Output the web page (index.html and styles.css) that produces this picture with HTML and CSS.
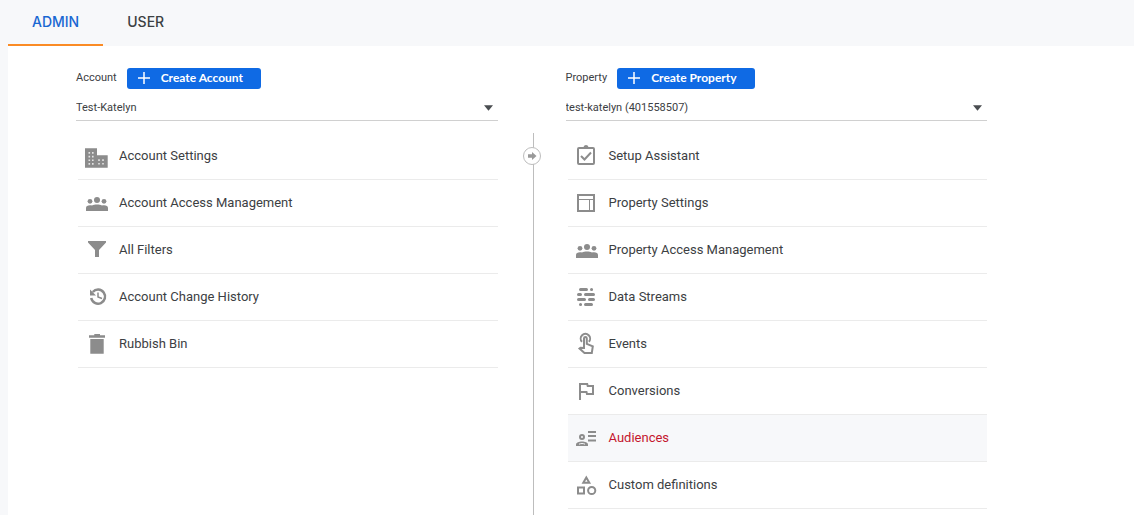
FILE: index.html
```html
<!DOCTYPE html>
<html lang="en-GB">
<head>
<meta charset="utf-8">
<title>Admin</title>
<link rel="stylesheet" href="styles.css">
</head>
<body>
<svg class="sprite" aria-hidden="true">
  <symbol id="people" viewBox="0 0 24 24">
    <circle cx="13" cy="9" r="3"/><circle cx="6" cy="10.3" r="2.4"/><circle cx="20" cy="10.3" r="2.4"/>
    <path d="M2 20v-3c0-2 1.500-2.800 4-2.800.9 0 1.500.1 2 .2 1.400-.7 3-1 5-1s3.600.3 5 1c.5-.1 1.100-.2 2-.2 2.500 0 4 .8 4 2.800v3z"/>
  </symbol>
  <symbol id="plus" viewBox="0 0 12 12"><path d="M6 0v12M0 6h12" fill="none" stroke="currentColor" stroke-width="1.500"/></symbol>
</svg>
<nav class="tabs">
  <a class="tab tab-active" href="#admin" aria-current="page">ADMIN</a>
  <a class="tab" href="#user">USER</a>
</nav>
<main class="panel">
  <section class="column">
    <div class="column-head">
      <label for="account">Account</label>
      <button class="create" type="button"><svg><use href="#plus"/></svg>Create Account</button>
    </div>
    <div class="picker">
      <select id="account"><option>Test-Katelyn</option></select>
      <svg class="caret" viewBox="0 0 10 6"><path d="M0 0h10L5 6z"/></svg>
    </div>
    <ul class="menu">
      <li><a href="#account-settings"><svg viewBox="0 0 24 24"><path d="M1 4.300h12v7h10.700v12.400H1z"/><path class="windows" d="M5.300 8v13M8.800 8v13M15 15.200v6M19 15.200v6"/></svg>Account Settings</a></li>
      <li><a href="#account-access"><svg><use href="#people"/></svg>Account Access Management</a></li>
      <li><a href="#filters"><svg viewBox="0 0 24 24"><path d="M4 3h18v1.500l-7 7.500v7h-4v-7L4 4.500z"/></svg>All Filters</a></li>
      <li><a href="#history"><svg viewBox="0 0 24 24"><path class="line bold" d="M7.200 13a7 7 0 1 0 1.600-6"/><path d="M6 4.500v6h6z"/><path class="line hands" d="M14 7.500V12l4 1.500"/></svg>Account Change History</a></li>
      <li><a href="#bin"><svg viewBox="0 0 24 24"><path d="M5 3.300h5.300V2H16v1.300h5v2.400H5zM6.300 7h13.400v14.700H6.300z"/></svg>Rubbish Bin</a></li>
    </ul>
  </section>
  <div class="divider">
    <button class="move" type="button" aria-label="Move"><svg viewBox="0 0 10 10"><path d="M1 3.200h4V1l4.500 4L5 9V6.800H1z"/></svg></button>
  </div>
  <section class="column">
    <div class="column-head">
      <label for="property">Property</label>
      <button class="create" type="button"><svg><use href="#plus"/></svg>Create Property</button>
    </div>
    <div class="picker">
      <select id="property"><option>test-katelyn (401558507)</option></select>
      <svg class="caret" viewBox="0 0 10 6"><path d="M0 0h10L5 6z"/></svg>
    </div>
    <ul class="menu">
      <li><a href="#setup"><svg viewBox="0 0 24 24"><rect class="line" x="4" y="4" width="16" height="16" rx="1"/><path d="M8 5V3h1.500a2.600 2.600 0 0 1 5 0H16v2z"/><path class="line" d="M7 12l3.500 3.500 6.500-7"/></svg>Setup Assistant</a></li>
      <li><a href="#property-settings"><svg viewBox="0 0 24 24"><path class="line" d="M4 4h16v16H4z"/><path class="line thin" d="M4 8.500h16M15.500 8.500V20"/></svg>Property Settings</a></li>
      <li><a href="#property-access"><svg><use href="#people"/></svg>Property Access Management</a></li>
      <li><a href="#streams"><svg viewBox="0 0 24 24"><path class="line dash" d="M6.500 4.500h6M17.500 4.500h.1M4.500 9.500h2M11.500 9.500h8M4.500 14.500h6M15.500 14.500h4M6.500 19.500h.1M11.500 19.500h6"/></svg>Data Streams</a></li>
      <li><a href="#events"><svg viewBox="0 0 24 24"><path class="line" d="M8 9.800a4.700 4.700 0 1 1 6.800 0"/><path class="line" d="M10 16V6.500a1.400 1.400 0 0 1 2.800 0v5.300l6 2.600-1 6.600h-7.300L5.500 16.500l1-.8z"/></svg>Events</a></li>
      <li><a href="#conversions"><svg viewBox="0 0 24 24"><path class="line" d="M6 21V5h7.200l.5 2H19v8h-6l-.5-2H6"/></svg>Conversions</a></li>
      <li><a class="selected" href="#audiences"><svg viewBox="0 0 24 24"><path class="line" d="M14 6h8M14 10h8M14 14.500h8"/><circle class="line" cx="8" cy="11" r="2"/><path d="M2 20v-1.500C2 16.500 5 15.500 8 15.500s6 1 6 3V20z"/><path class="hollow" d="M5 18.200c1.500-.9 4.500-.9 6 0"/></svg>Audiences</a></li>
      <li><a href="#definitions"><svg viewBox="0 0 24 24"><path class="line" d="M12.300 4.500l-3 5.200h6zM4 14.500h6v6H4z"/><circle class="line" cx="17.700" cy="17.500" r="3.600"/></svg>Custom definitions</a></li>
    </ul>
  </section>
</main>
</body>
</html>
```
FILE: styles.css
```css
* { box-sizing: border-box; }
body {
  margin: 0;
  min-height: 100vh;
  display: flex;
  flex-direction: column;
  background: #f7f8fa;
  color: #3c4043;
  font-family: Roboto, sans-serif;
  font-size: 13px;
}
.sprite { display: none; }
.tabs { display: flex; padding-left: 8px; }
.tab {
  padding: 12px 24px 12px;
  border-bottom: 2px solid transparent;
  color: #3c4043;
  font: 500 14px/20px Inter, sans-serif;
  text-decoration: none;
}
.tab-active { border-color: #fa8b25; color: #1967d2; }
.panel {
  flex: 1;
  display: grid;
  grid-template-columns: 1fr 68px 1fr;
  margin-left: 8px;
  padding: 21px 147px 0 68px;
  background: #fff;
}
.column-head { display: flex; align-items: center; gap: 10px; height: 22px; font-size: 11px; }
.column-head label { padding-bottom: 2px; }
.create {
  display: flex;
  align-items: center;
  gap: 11px;
  height: 21px;
  padding: 0 18px 0 11px;
  border: 0;
  border-radius: 3px;
  background: #0f6ae4;
  color: #fff;
  font: 700 12px/20px Lato, sans-serif;
}
.create svg { width: 12px; height: 12px; }
.picker { position: relative; margin-top: 5px; border-bottom: 1px solid #d0d0d0; }
.picker select {
  display: block;
  width: 100%;
  height: 26px;
  padding: 0;
  border: 0;
  appearance: none;
  background: transparent;
  color: #3c4043;
  font: 11px Roboto, sans-serif;
}
.caret { position: absolute; right: 5px; top: 11px; width: 9px; height: 6px; fill: #4a4d51; pointer-events: none; }
.menu { list-style: none; margin: 12px 0 0 2px; padding: 0; }
.menu a {
  display: flex;
  align-items: center;
  gap: 11px;
  height: 47px;
  padding: 0 6px 2px;
  border-bottom: 1px solid #ebebeb;
  color: #3c4043;
  text-decoration: none;
}
.menu svg { flex: none; width: 24px; height: 24px; margin-top: 2px; fill: #8c8c8c; }
.menu .selected { background: #f7f8fa; color: #c5162e; }
.menu .line { fill: none; stroke: #8c8c8c; stroke-width: 2; }
.menu .thin { stroke-width: 1; }
.menu .hands { stroke-width: 1.5; }
.menu .bold { stroke-width: 2.5; }
.menu .dash { stroke-width: 3; stroke-linecap: round; }
.menu .hollow { fill: none; stroke: #f7f8fa; stroke-width: 1; }
.menu .windows { fill: none; stroke: #e4e4e4; stroke-width: 1.6; stroke-dasharray: 1.7 2; }
.divider {
  display: flex;
  justify-content: center;
  align-items: flex-start;
  margin-top: 66px;
  padding-top: 14px;
  background: linear-gradient(#bdbdbd, #bdbdbd) 35px 0 / 1px 100% no-repeat;
}
.move {
  display: grid;
  place-items: center;
  width: 18px;
  height: 18px;
  padding: 0;
  border: 1px solid #bdbdbd;
  border-radius: 50%;
  background: #fff;
}
.move svg { width: 10px; height: 10px; fill: #999; }
```
